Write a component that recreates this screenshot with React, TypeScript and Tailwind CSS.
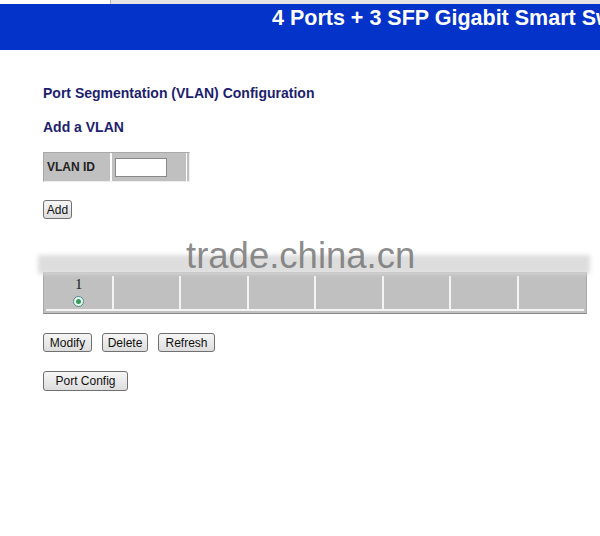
import { useState } from "react";

const font = { fontFamily: '"Liberation Sans", Arial, sans-serif' };

function Btn({ label, className = "" }: { label: string; className?: string }) {
  return (
    <button
      className={
        "block h-[19px] rounded-[3px] border border-[#707070] bg-gradient-to-b from-[#f6f6f6] to-[#dddddd] text-[12px] leading-none text-[#111] " +
        className
      }
    >
      {label}
    </button>
  );
}

export default function App() {
  const [vlanId, setVlanId] = useState("");
  const ports = [1, 2, 3, 4, 5, 6, 7, 8];

  return (
    <div className="relative h-[536px] w-[600px] overflow-hidden bg-white" style={font}>
      {/* top strip */}
      <div className="flex h-[4px]">
        <div className="w-[110px]" />
        <div className="flex-1 border-l border-[#bbb] bg-[#e4e4e4]" />
      </div>

      {/* Header */}
      <div className="h-[46px] overflow-hidden whitespace-nowrap bg-[#0333c8] pl-[272px] text-[21.5px] font-bold leading-[28px] text-white">
        4 Ports + 3 SFP Gigabit Smart Switch
      </div>

      <div className="flex flex-col items-start px-[43px]">
        <h1 className="mt-[35px] text-[14px] font-bold leading-[16px] text-[#1e1e6e]">
          Port Segmentation (VLAN) Configuration
        </h1>
        <h2 className="mt-[18px] text-[14px] font-bold leading-[16px] text-[#1e1e6e]">Add a VLAN</h2>

        {/* VLAN ID table */}
        <div className="mt-[17px] flex h-[30px] w-[147px] border border-[#a8a8a8] border-r-[#eee] border-b-[#eee] bg-[#c0c0c0]">
          <div className="flex w-[68px] items-center border-r-2 border-white pl-[3px] text-[12px] font-bold text-[#222]">
            VLAN ID
          </div>
          <div className="flex flex-1 items-center pl-[3px]">
            <input
              value={vlanId}
              onChange={(e) => setVlanId(e.target.value)}
              className="h-[19px] w-[52px] border border-[#888] bg-white text-[12px] outline-none"
            />
            <div className="ml-auto h-full w-[3px] border-l border-white" />
          </div>
        </div>

        <Btn label="Add" className="mt-[18px] w-[29px]" />

        {/* Ports table */}
        <div className="mt-[53px] flex h-[42px] w-[544px] border border-[#aaa] border-b-[#888] bg-[#c0c0c0] p-[2px] pt-[3px]">
          {ports.map((p) => (
            <div
              key={p}
              className="flex flex-1 flex-col items-center border-r-2 border-b-2 border-[#f4f4f4] last:border-r-0"
            >
              {p === 1 && (
                <>
                  <span
                    className="mt-[1px] text-[14px] leading-[15px] text-[#111]"
                    style={{ fontFamily: '"Liberation Serif", serif' }}
                  >
                    1
                  </span>
                  <span className="mt-[4px] flex h-[11px] w-[11px] items-center justify-center rounded-full border border-[#4a8a8a] bg-[#eafaf0]">
                    <span className="h-[5px] w-[5px] rounded-full bg-[#3a9a5a]" />
                  </span>
                </>
              )}
            </div>
          ))}
        </div>

        <div className="mt-[19px] flex gap-[10px]">
          <Btn label="Modify" className="w-[49px]" />
          <Btn label="Delete" className="w-[46px]" />
          <Btn label="Refresh" className="w-[57px]" />
        </div>

        <Btn label="Port Config" className="mt-[19px] h-[20px] w-[85px]" />
      </div>

      {/* watermark */}
      <div className="pointer-events-none absolute left-[38px] top-[255px] h-[19px] w-[552px] bg-[#d9d9d9]/90 blur-[2px]" />
      <div
        className="pointer-events-none absolute left-[186px] top-[238px] text-[36.5px] leading-none text-[#777]/85"
        style={font}
      >
        trade.china.cn
      </div>
    </div>
  );
}
